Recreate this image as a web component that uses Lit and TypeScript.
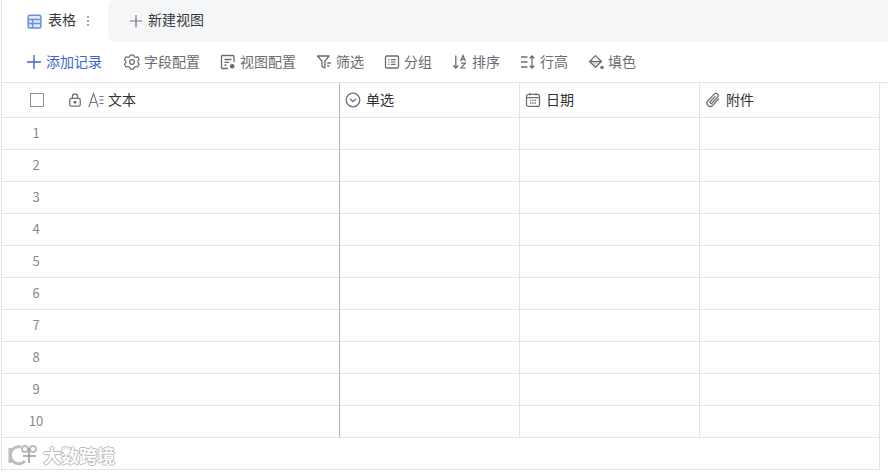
import { LitElement, html, css, svg } from "lit";
import { customElement } from "lit/decorators.js";

const ic = (body: unknown, cls = "") => html`<svg class="ico ${cls}" viewBox="0 0 16 16" fill="none" stroke="currentColor" stroke-width="1.2">${body}</svg>`;

const icons: Record<string, unknown> = {
  gear: svg`<path d="M6.2 1.2h3.6l.6 1.8 1.9.4 1.3-.6 1.6 2.9-1.2 1.2v2l1.2 1.2-1.6 2.9-1.9-.5-1.7 1-.5 1.7H6.2l-.5-1.7-1.7-1-1.9.5L.5 10.1l1.2-1.2v-2L.5 5.7l1.6-2.9 1.9.6 1.7-1z" stroke-linejoin="round"/><circle cx="8" cy="8" r="2.4"/>`,
  view: svg`<path d="M14 8V2.2a.7.7 0 0 0-.7-.7H2.2a.7.7 0 0 0-.7.7v11.6c0 .4.3.7.7.7H8" stroke-width="1.3"/><path d="M4.5 5.5h7M4.5 8.3h4.5M4.5 11h2" stroke-width="1.3"/><circle cx="12.2" cy="12.2" r="2.3" fill="currentColor" stroke="none"/>`,
  filter: svg`<path d="M1.5 2h11.6L8.9 7.2v6.8L6 12.4V7.2z" stroke-linejoin="round" stroke-width="1.3"/><path d="M11.2 9h3.6M11.2 12h2.2" stroke-width="1.3"/>`,
  group: svg`<rect x="1.5" y="2" width="13" height="12" rx="1.2" stroke-width="1.3"/><path d="M4.4 5.6h1.2M7 5.6h4.6M4.4 8h1.2M7 8h4.6M4.4 10.4h1.2M7 10.4h4.6"/>`,
  sort: svg`<path d="M3.8 1.5v12.4M1.4 11.5L3.8 14l2.4-2.5" stroke-width="1.3"/><path d="M8.6 7.2l2.4-5.8 2.4 5.8M9.4 5.4h3.2M9 9.2h4.4L9 14h4.8" stroke-width="1.2"/>`,
  height: svg`<path d="M1 3h6.5M1 8h6.5M1 13h6.5" stroke-width="1.3"/><path d="M12 2v12M9.8 4.2L12 2l2.2 2.2M9.8 11.8L12 14l2.2-2.2" stroke-width="1.3"/>`,
  fill: svg`<path d="M7.5 1.6l5.9 5.9-5.9 5.9L1.6 7.5z" stroke-linejoin="round" stroke-width="1.3"/><path d="M1.8 7.5h11.4" stroke-width="1.3"/><path d="M1.8 7.5l5.7 5.7 5.7-5.7z" fill="currentColor" fill-opacity=".25" stroke="none"/><circle cx="14" cy="13.4" r="1.7" fill="currentColor" stroke="none"/>`,
  lock: svg`<rect x="2" y="6.2" width="12" height="8.8" rx="2" stroke-width="1.5"/><path d="M5 6V4a3 3 0 0 1 6 0v2" stroke-width="1.5"/><circle cx="8" cy="10.5" r="1.7" fill="currentColor" stroke="none"/>`,
  text: svg`<path d="M.8 15L5.5 1.6 10.2 15M2.4 10.5h6.2" stroke-width="1.1"/><path d="M11.5 4.5h4M11.5 8h4M11.5 11.5h4" stroke-width="1.1"/>`,
  select: svg`<circle cx="8" cy="8" r="6.8" stroke-width="1.3"/><path d="M5 6.7L8 9.7l3-3" stroke-width="1.3"/>`,
  date: svg`<rect x="1.5" y="2.4" width="13" height="12" rx="2" stroke-width="1.3"/><path d="M5 1v2.6M11 1v2.6M1.8 5.6h12.4" stroke-width="1.3"/><path d="M5 8.4h1.4M7.3 8.4h1.4M9.6 8.4H11M5 11h1.4M7.3 11h1.4M9.6 11H11" stroke-width="1.3"/>`,
  clip: svg`<path d="M14 6.6l-6.2 6.6a3.3 3.3 0 0 1-4.9-4.5l6.3-6.6a2.3 2.3 0 0 1 3.4 3.1L7 11a1.1 1.1 0 0 1-1.7-1.5l5.2-5.4" stroke-width="1.3"/>`,
};

const tools: [string, string][] = [
  ["gear", "字段配置"], ["view", "视图配置"], ["filter", "筛选"], ["group", "分组"],
  ["sort", "排序"], ["height", "行高"], ["fill", "填色"],
];
const cols: [string, string][] = [["select", "单选"], ["date", "日期"], ["clip", "附件"]];

@customElement("app-root")
export class AppRoot extends LitElement {
  static styles = css`
    :host { display: block; width: 888px; height: 472px; position: relative; overflow: hidden; background: #fff;
      font-family: "Noto Sans CJK SC", "Liberation Sans", sans-serif; font-size: 14px; line-height: 20px; color: #37393d; }
    .ico { width: 16px; height: 16px; flex: none; display: block; }
    .page { border-left: 1px solid #e3e4e6; margin-left: 1px; }
    .lbl { display: block; margin-top: -1px; margin-bottom: 1px; }

    .tabs { height: 42px; display: flex; background: #fff; }
    .tab { width: 106px; display: flex; align-items: center; padding-left: 25px; box-sizing: border-box; gap: 6px; }
    .tab .ico { color: #6c90dc; width: 15px; height: 15px; }
    .tab .lbl { margin-top: -2px; margin-bottom: 2px; }
    .dots { display: flex; flex-direction: column; gap: 2px; margin-left: 5px; }
    .dots i { width: 2px; height: 2px; background: #a3a6ab; display: block; }
    .new { flex: 1; background: #f5f6f8; border-radius: 7px 0 0 7px; display: flex; align-items: center; gap: 5px; padding-left: 21px; }
    .new .ico { color: #77797e; width: 14px; height: 14px; }
    .new .lbl { margin-top: -2px; margin-bottom: 2px; }

    .bar { height: 40px; display: flex; align-items: center; padding-left: 24px; box-sizing: border-box; }
    .add { display: flex; align-items: center; gap: 4px; color: #3a67c9; margin-right: 22px; }
    .tool { display: flex; align-items: center; gap: 4px; color: #6a6c71; margin-right: 20px; }

    .grid { border-top: 1px solid #e3e4e6; width: 886px; display: grid; grid-template-columns: 338px 180px 180px 180px; grid-template-rows: 35px; grid-auto-rows: 32px; }
    .cell { border-right: 1px solid #e3e4e6; border-bottom: 1px solid #e3e4e6; box-sizing: border-box; display: flex; align-items: center; }
    .strong { border-right-color: #b4b6ba; }
    .head .ico { color: #6f7176; }
    .head.cell { gap: 5px; padding-left: 5px; color: #2f3135; }
    .first.head { padding-left: 28px; gap: 0; }
    .box { width: 12px; height: 12px; border: 1px solid #8d8f94; margin-right: 24px; flex: none; }
    .lock { width: 14px; height: 14px; margin-right: 6px; }
    .txt { margin-right: 4px; }
    .num { color: #888; font-size: 13px; }
    .num .lbl { width: 68px; text-align: center; }
    .foot { grid-column: 1 / -1; width: 878px; }

    .mark { position: absolute; left: 8px; top: 443px; display: flex; align-items: center; gap: 3px; color: #fff; font-size: 18px; font-weight: 700; line-height: 24px;
      text-shadow: 1px 0 0 #b9babc, -1px 0 0 #b9babc, 0 1px 0 #b9babc, 0 -1px 0 #b9babc; }
    .mark svg { width: 32px; height: 24px; display: block; }
  `;

  render() {
    const plus = svg`<path d="M8 1v14M1 8h14" stroke-width="1.4"/>`;
    return html`
      <div class="page">
        <div class="tabs">
          <div class="tab">
            ${ic(svg`<rect x="1.2" y="1.2" width="13.6" height="13.6" rx="1.6" fill="#dfe7f8" stroke-width="1.6"/><path d="M1.2 5.8h13.6M1.2 10.2h13.6M6 5.8v9" stroke-width="1.6"/>`)}
            <span class="lbl">表格</span>
            <div class="dots"><i></i><i></i><i></i></div>
          </div>
          <div class="new">${ic(plus)}<span class="lbl">新建视图</span></div>
        </div>
        <div class="bar">
          <div class="add">${ic(plus)}<span class="lbl">添加记录</span></div>
          ${tools.map(([i, t]) => html`<div class="tool">${ic(icons[i])}<span class="lbl">${t}</span></div>`)}
        </div>
        <div class="grid">
          <div class="cell head first strong">
            <div class="box"></div>
            ${ic(icons.lock, "lock")}${ic(icons.text, "txt")}<span class="lbl">文本</span>
          </div>
          ${cols.map(([i, t]) => html`<div class="cell head">${ic(icons[i])}<span class="lbl">${t}</span></div>`)}
          ${Array.from({ length: 10 }, (_, r) => html`
            <div class="cell num strong"><span class="lbl">${r + 1}</span></div>
            <div class="cell"></div><div class="cell"></div><div class="cell"></div>
          `)}
          <div class="cell foot"></div>
        </div>
      </div>
      <div class="mark">
        <svg viewBox="0 0 32 24" fill="none" stroke="#bcbdbf" stroke-width="2">
          <path d="M2 5v15" stroke-width="3"/>
          <path d="M13 4a8.5 8.5 0 1 0 4 14" stroke-width="3"/>
          <circle cx="17" cy="6" r="3"/><circle cx="25" cy="6" r="3"/>
          <path d="M21 5v15M15 13h13" stroke="#9a9b9d" stroke-width="1.6"/>
        </svg>
        <span>大数跨境</span>
      </div>
    `;
  }
}
